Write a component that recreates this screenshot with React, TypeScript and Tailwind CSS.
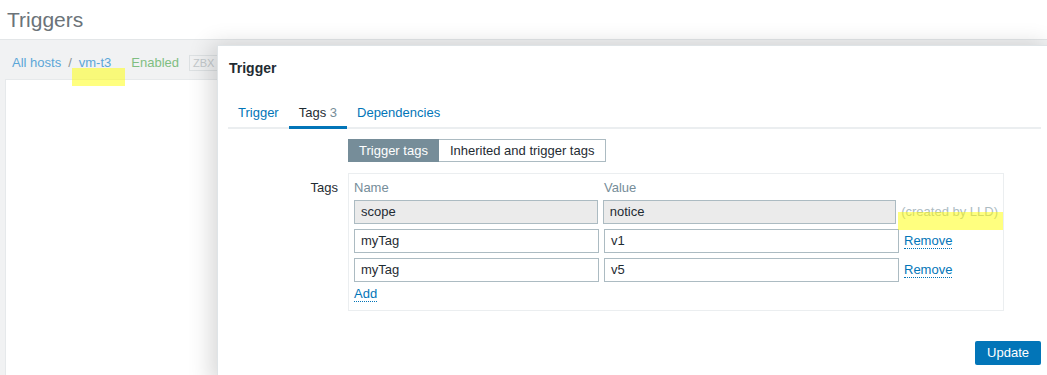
import React from 'react';

const tagRows = [
  { name: 'scope', value: 'notice', inherited: true },
  { name: 'myTag', value: 'v1', inherited: false },
  { name: 'myTag', value: 'v5', inherited: false },
];

const TagRow = ({ name, value, inherited }: { name: string; value: string; inherited: boolean }) => {
  const box = inherited ? 'bg-[#ebebeb]' : 'bg-white';
  return (
    <div className="flex gap-[5px] items-center">
      <div className={`w-[245px] h-[24px] border border-[#acbbc2] ${box} px-[6px] leading-[22px] text-[#1f2c33]`}>{name}</div>
      <div className={`w-[295px] h-[24px] border border-[#acbbc2] ${box} px-[6px] leading-[22px] text-[#1f2c33]`}>{value}</div>
      {inherited ? (
        <span className="whitespace-nowrap text-[#acbbc2]">(created by LLD)</span>
      ) : (
        <span className="whitespace-nowrap text-[#0275b8] border-b border-dotted border-[#0275b8] leading-[14px]">Remove</span>
      )}
    </div>
  );
};

const TriggerDialog = () => {
  return (
    <div className="absolute left-[217px] top-[45px] w-[834px] h-[340px] bg-white border-t border-l border-[#dfe4e7] shadow-[-6px_0_22px_rgba(0,0,0,0.16)]">
      <div className="h-[45px] flex items-center px-[11px] text-[14px] font-bold text-[#1f2c33]">Trigger</div>

      <div className="px-[10px] pt-[8px]">
        {/* tabs */}
        <div className="flex border-b-2 border-[#ebeef0]">
          <div className="px-[10px] h-[30px] leading-[27px] -mb-[2px] border-b-[3px] border-transparent text-[#0275b8]">Trigger</div>
          <div className="px-[10px] h-[30px] leading-[27px] -mb-[2px] border-b-[3px] border-[#0275b8] text-[#1f2c33]">
            Tags <span className="text-[#768d99]">3</span>
          </div>
          <div className="px-[10px] h-[30px] leading-[27px] -mb-[2px] border-b-[3px] border-transparent text-[#0275b8]">Dependencies</div>
        </div>

        {/* form */}
        <div className="flex flex-col gap-[11px] mt-[10px]">
          <div className="flex">
            <div className="w-[120px]" />
            <div className="flex h-[23px]">
              <div className="px-[10px] bg-[#768d99] border border-[#768d99] text-white leading-[21px]">Trigger tags</div>
              <div className="px-[11px] bg-white border border-[#acbbc2] border-l-0 text-[#1f2c33] leading-[21px]">Inherited and trigger tags</div>
            </div>
          </div>

          <div className="flex">
            <div className="w-[120px] pr-[10px] text-right pt-[6px] leading-[17px] text-[#1f2c33]">Tags</div>
            <div className="w-[656px] border border-[#ebeef0] px-[5px] pt-[5px] pb-[8px]">
              <div className="flex flex-col gap-[4px]">
                <div className="flex gap-[5px] leading-[17px] text-[#768d99]">
                  <div className="w-[245px]">Name</div>
                  <div className="w-[295px]">Value</div>
                </div>
                <div className="flex flex-col gap-[5px]">
                  {tagRows.map((r, i) => (
                    <TagRow key={i} {...r} />
                  ))}
                </div>
              </div>
              <div className="mt-[4px] leading-[16px]">
                <span className="text-[#0275b8] border-b border-dotted border-[#0275b8]">Add</span>
              </div>
            </div>
          </div>
        </div>

        <div className="flex justify-end mt-[30px] w-[813px]">
          <div className="h-[24px] px-[12px] leading-[24px] bg-[#0275b8] text-white rounded-[2px]">Update</div>
        </div>
      </div>
    </div>
  );
};

export default function App() {
  return (
    <div className="relative w-[1047px] h-[375px] overflow-hidden bg-[#f1f2f3] font-['Liberation_Sans',Arial,sans-serif] text-[13px]">
      <div className="h-[40px] bg-white border-b border-[#e3e6e8] flex items-center px-[7px]">
        <h1 className="text-[21px] text-[#6b7379]">Triggers</h1>
      </div>

      <div className="flex items-center h-[39px] px-[12px] pt-[6px] gap-[7px]">
        <span className="text-[#5ba6d8]">All hosts</span>
        <span className="text-[#8a9297]">/</span>
        <span className="text-[#5ba6d8]">vm-t3</span>
        <span className="ml-[13px] text-[#7fbe82]">Enabled</span>
        <span className="ml-[3px] px-[3px] border border-[#dde1e3] text-[#c4c9cc] text-[11px] leading-[14px]">ZBX</span>
      </div>

      <div className="ml-[5px] h-[300px] bg-white border-l border-t border-[#e6e9eb]" />

      <TriggerDialog />

      {/* highlight marks */}
      <div className="absolute left-[72px] top-[68px] w-[53px] h-[18px] bg-[rgba(255,255,0,0.5)]" />
      <div className="absolute left-[898px] top-[212px] w-[105px] h-[18px] bg-[rgba(255,255,0,0.5)]" />
    </div>
  );
}
